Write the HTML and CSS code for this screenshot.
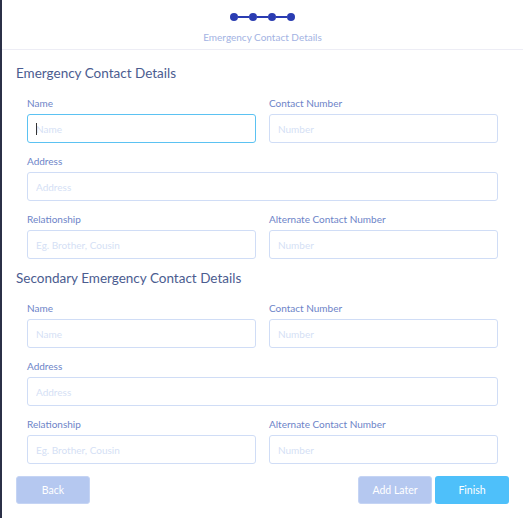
FILE: index.html
```html
<!DOCTYPE html>
<html lang="en">
<head>
    <meta charset="UTF-8">
    <meta name="viewport" content="width=device-width, initial-scale=1.0">
    <title>Emergency Contact Details</title>
    <link rel="stylesheet" href="styles.css">
</head>
<body>
    <header class="wizard-header">
        <div class="stepper">
            <span class="step-dot"></span>
            <span class="step-line"></span>
            <span class="step-dot"></span>
            <span class="step-line"></span>
            <span class="step-dot"></span>
            <span class="step-line"></span>
            <span class="step-dot"></span>
        </div>
        <p class="step-title">Emergency Contact Details</p>
    </header>

    <main class="wizard-body">
        <h2 class="section-title">Emergency Contact Details</h2>
        <div class="field-grid">
            <div class="field">
                <label>Name</label>
                <div class="input-wrap">
                    <input type="text" class="active" placeholder="Name">
                    <span class="caret"></span>
                </div>
            </div>
            <div class="field">
                <label>Contact Number</label>
                <input type="text" placeholder="Number">
            </div>
            <div class="field wide">
                <label>Address</label>
                <input type="text" placeholder="Address">
            </div>
            <div class="field">
                <label>Relationship</label>
                <input type="text" placeholder="Eg. Brother, Cousin">
            </div>
            <div class="field">
                <label>Alternate Contact Number</label>
                <input type="text" placeholder="Number">
            </div>
        </div>

        <h2 class="section-title second">Secondary Emergency Contact Details</h2>
        <div class="field-grid">
            <div class="field">
                <label>Name</label>
                <input type="text" placeholder="Name">
            </div>
            <div class="field">
                <label>Contact Number</label>
                <input type="text" placeholder="Number">
            </div>
            <div class="field wide">
                <label>Address</label>
                <input type="text" placeholder="Address">
            </div>
            <div class="field">
                <label>Relationship</label>
                <input type="text" placeholder="Eg. Brother, Cousin">
            </div>
            <div class="field">
                <label>Alternate Contact Number</label>
                <input type="text" placeholder="Number">
            </div>
        </div>

        <div class="actions">
            <button class="btn btn-muted">Back</button>
            <div class="actions-right">
                <button class="btn btn-muted">Add Later</button>
                <button class="btn btn-primary">Finish</button>
            </div>
        </div>
    </main>
</body>
</html>
```

FILE: styles.css
```css
body {
    font-family: Lato, 'Open Sans', sans-serif;
    margin: 0;
    min-height: 518px;
    box-sizing: border-box;
    border-left: 2px solid #2b3047;
    background-color: #fff;
    color: #4a5a8c;
}
.wizard-header {
    display: flex;
    flex-direction: column;
    align-items: center;
    padding-top: 13px;
    border-bottom: 1px solid #ededf5;
    height: 36px;
}
.stepper {
    display: flex;
    align-items: center;
    height: 8px;
}
.step-dot {
    width: 8px;
    height: 8px;
    border-radius: 50%;
    background-color: #2a3cb2;
}
.step-line {
    width: 11px;
    height: 2px;
    background-color: #2a3cb2;
}
.step-title {
    margin: 10px 0 0;
    font-size: 10px;
    line-height: 12px;
    color: #a3b3e3;
}
.wizard-body {
    padding: 0 14px 0 14px;
}
.section-title {
    margin: 15px 0 16px;
    font-size: 13.5px;
    line-height: 16px;
    font-weight: 400;
    color: #4b5c90;
}
.section-title.second {
    margin-top: 11px;
    margin-bottom: 16px;
}
.field-grid {
    display: grid;
    grid-template-columns: 1fr 1fr;
    column-gap: 13px;
    padding: 0 11px;
}
.field {
    display: flex;
    flex-direction: column;
    margin-bottom: 12px;
}
.field-grid .field:nth-last-child(-n+2) {
    margin-bottom: 0;
}
.field.wide {
    grid-column: span 2;
}
.field label {
    font-size: 10px;
    line-height: 12px;
    color: #6d84c8;
    margin-bottom: 5px;
}
.input-wrap {
    position: relative;
}
.field input {
    width: 100%;
    box-sizing: border-box;
    height: 29px;
    padding: 0 8px;
    border: 1px solid #d0ddf6;
    border-radius: 3px;
    font-family: inherit;
    font-size: 10px;
    color: #4a5a8c;
    outline: none;
}
.field input::placeholder {
    color: #d5dff5;
}
.field input.active {
    border-color: #5bc2f2;
}
.caret {
    position: absolute;
    left: 9px;
    top: 9px;
    width: 1px;
    height: 12px;
    background-color: #333;
}
.actions {
    display: flex;
    justify-content: space-between;
    margin-top: 12px;
}
.actions-right {
    display: flex;
    gap: 3px;
}
.btn {
    width: 74px;
    height: 28px;
    border: 1px solid transparent;
    border-radius: 3px;
    font-family: inherit;
    font-size: 10.5px;
    color: #fff;
    cursor: pointer;
}
.btn-muted {
    background-color: #b5c8f0;
    border-color: #c5d4f4;
}
.btn-primary {
    background-color: #4ec0fa;
}
```
